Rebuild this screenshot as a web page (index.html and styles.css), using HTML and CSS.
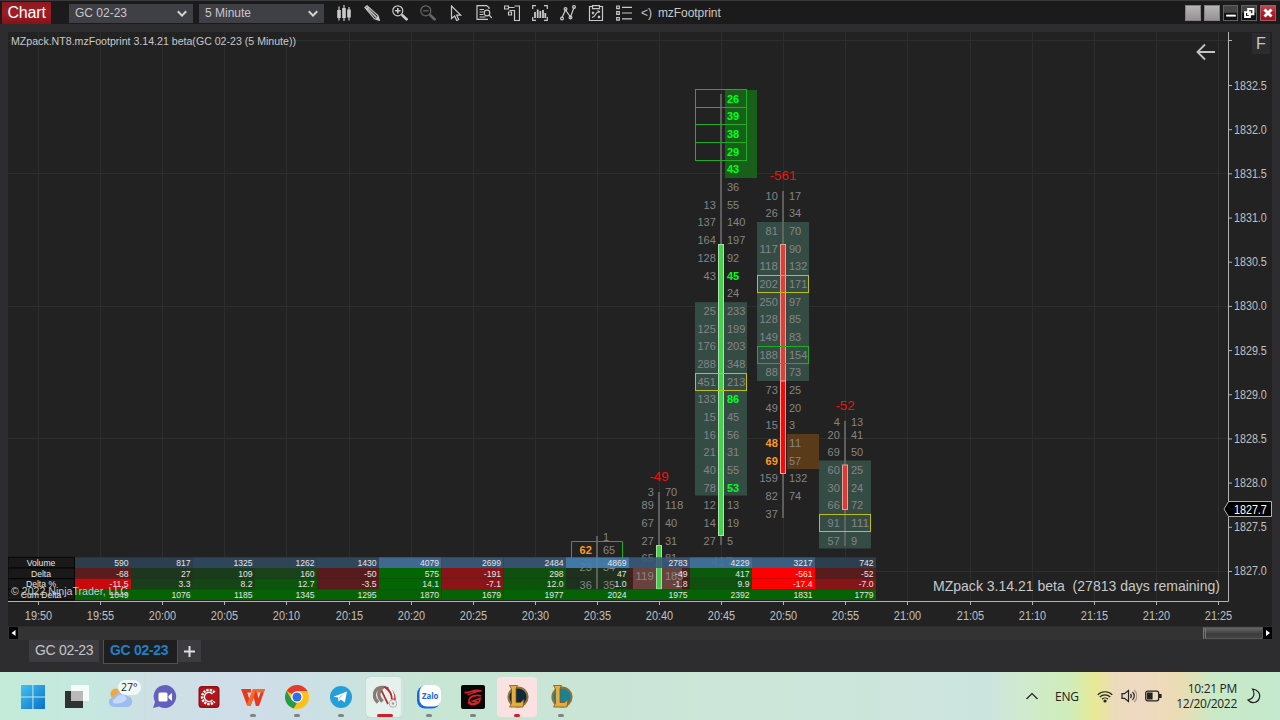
FILE: index.html
```html
<!DOCTYPE html>
<html lang="en">
<head>
<meta charset="utf-8">
<title>Chart - GC 02-23</title>
<link rel="stylesheet" href="styles.css">
</head>
<body>
<div class="window">
  <header class="titlebar">
    <div class="brand">Chart</div>
    <div class="combo combo-first"><span>GC 02-23</span><svg width="10" height="7" viewBox="0 0 10 7"><path d="M.8 1.200 5 5.600 9.200 1.200"/></svg></div>
    <div class="combo"><span>5 Minute</span><svg width="10" height="7" viewBox="0 0 10 7"><path d="M.8 1.200 5 5.600 9.200 1.200"/></svg></div>
    <div class="tools">
      <svg viewBox="0 0 16 16"><path d="M3 1.500v14M8 0v16M13 2v13.500"/><path class="fill" d="M1.200 5h3.600v8H1.200zM6.200 3h3.600v10H6.200zM11.200 4.500h3.600v8h-3.600z"/></svg>
      <svg viewBox="0 0 16 16"><path d="M1 2.500 3 .8 14 10.500 15.300 15.300 10.500 13.800z"/><path d="M2.500 2.500 12.500 12.500M2.500 4.500 4.800 2.200" stroke-width="1.600"/><path class="fill" d="M11.500 13.800 14 11 15.600 15.600z"/></svg>
      <svg viewBox="0 0 16 16"><circle cx="5.800" cy="5.800" r="5"/><path d="M3 5.800h5.600M5.800 3v5.600" stroke-width="1.600"/><path class="thick" d="M9.800 9.800 15.300 15"/></svg>
      <svg class="off" viewBox="0 0 16 16"><circle cx="5.800" cy="5.800" r="5"/><path d="M3 5.800h5.600"/><path class="thick" d="M9.800 9.800 15.300 15"/></svg>
      <svg viewBox="0 0 16 16"><path d="M3.500 1v12.500L6.700 11l2 4.500 2-1-2-4.300h4z"/></svg>
      <svg viewBox="0 0 16 16"><path d="M13 4V2.500L10.500 .6H1v13.800h11M3.500 4.500H8M3.500 7h4M3.500 9.500h4M3.500 12h6"/><circle cx="11" cy="8" r="2.800"/><path d="M13 10l3 3"/></svg>
      <svg viewBox="0 0 16 16"><path d="M10.500 1h5v14.500h-5v-10h-5M.5 1h4v3h-4zM5 2.500h5.500M5.500 7h-1v3h3V7z"/></svg>
      <svg viewBox="0 0 16 16"><path d="M.7 4V.7H4M12 .7h3.300V4M.7 12v3.300H4M12 15.300h3.300V12"/><path d="M3 7v6M5.700 4.500V13M8.300 6v7M11 5v8M13.300 8v5" stroke-width="1.800"/></svg>
      <svg viewBox="0 0 16 16"><path d="M2 12.500 5.500 5l5 7L14 2.500"/><circle cx="2" cy="13.500" r="1.400"/><circle cx="5.500" cy="4" r="1.400"/><circle cx="10.500" cy="12.500" r="1.400"/><circle cx="14" cy="2" r="1.400"/></svg>
      <svg viewBox="0 0 16 16"><path d="M4 1.500H1.500v14h13v-14H12M4.500 .6h7v3h-7zM4 7l2 2M6 7 4 9M10 11l2 2m0-2-2 2M4 12.500l2-1 3-4 3-.500M9.500 5.500 12 7"/></svg>
      <svg viewBox="0 0 16 16"><path d="M.7 1h2.600v2.600H.7zM.7 6.700h2.600v2.600H.7zM.7 12.500h2.600v2.600H.7zM6 2.300h10M6 8h10M6 13.800h10"/></svg>
    </div>
    <div class="script-name"><span>&lt;)</span><span>mzFootprint</span></div>
    <div class="winbtns">
      <i class="wb light"></i><i class="wb light"></i>
      <i class="wb"><svg viewBox="0 0 16 16"><path d="M2.500 11h11"/></svg></i>
      <i class="wb"><svg viewBox="0 0 16 16"><path d="M7 3.500h6v6H7zM3.500 7h5.500v5.500H3.500z"/></svg></i>
      <i class="wb close"><svg viewBox="0 0 16 16"><path d="M4 4l8 8M12 4l-8 8"/></svg></i>
    </div>
  </header>
  <main class="panel">
    <svg id="chart" class="chart" width="1264" height="594" viewBox="8 32 1264 594"></svg>
    <div class="scrollbar">
      <span class="arrow"><svg viewBox="0 0 9 12"><path d="M6.500 3v6L2.500 6z"/></svg></span>
      <span class="thumb"></span>
      <span class="arrow"><svg viewBox="0 0 9 12"><path d="M3 3v6l4-3z"/></svg></span>
    </div>
    <nav class="tabs">
      <span class="tab">GC 02-23</span>
      <span class="tab active">GC 02-23</span>
      <span class="tab add"><svg width="11" height="11" viewBox="0 0 11 11"><path d="M5.500 0v11M0 5.500h11"/></svg></span>
    </nav>
  </main>
</div>
<footer class="taskbar">
  <div class="apps">
    <div class="app"><svg viewBox="0 0 24 24"><defs><linearGradient id="win" x2="1" y2="1"><stop stop-color="#42c3f3"/><stop offset="1" stop-color="#0a6ecb"/></linearGradient></defs><path fill="url(#win)" d="M0 0h11.400v11.400H0zM12.400 0H24v11.400H12.400zM0 12.400h11.400V24H0zM12.400 12.400H24V24H12.400z"/></svg></div>
    <div class="app"><svg viewBox="0 0 24 24"><path fill="#303232" d="M0 6h18v17H0z"/><path fill="#fff" opacity=".8" d="M6 0h18v16H6z"/><path fill="#b9b9b9" d="M6 6h12v10H6z"/></svg></div>
    <div class="app weather"><svg viewBox="0 0 24 24"><circle cx="7" cy="9" r="5.500" fill="#f0a83a"/><path fill="#9dbcf0" d="M5 22a5 5 0 0 1 0-10 7 7 0 0 1 13-1 5.600 5.600 0 0 1 1 11z"/><path fill="#c6d9f8" d="M4 18a4 4 0 0 1 3-5 6 6 0 0 1 10-1c3 4-7 8-13 6z"/></svg><b>27°</b></div>
    <div class="app"><svg viewBox="0 0 24 24"><path fill="#6460be" d="M12 0a11.500 11.500 0 1 1-6 21.500L0 23l2-6A11.500 11.500 0 0 1 12 0z"/><rect x="5.500" y="7.500" width="9" height="9" rx="1.500" fill="#fff"/><path fill="#fff" d="m15.500 11 3.500-3v8l-3.500-3z"/></svg></div>
    <div class="app"><svg viewBox="0 0 24 24"><rect x="1.500" y="1" width="21" height="22" rx="3.500" fill="#8c1016"/><rect x="3" y="2.500" width="18" height="19" rx="2.500" fill="#b5141b"/><path d="M17.500 7.500a7 7 0 1 0 0 9" fill="none" stroke="#fff" stroke-width="2.600" stroke-dasharray="2.200 1"/><path d="M15.500 9a4.600 4.600 0 1 0 0 6" fill="none" stroke="#fff" stroke-width="1.300"/></svg></div>
    <div class="app run"><svg viewBox="0 0 24 24"><path fill="#e8391e" d="M0 4h10v3.500H6.300L8.300 14 12 4h3.500l1.800 9.500L21 4h3l-6 17h-3.200l-2-8.500L9.500 21H6.300z"/><path fill="#f76a2c" d="M14.500 4H24l-1.200 3.500h-7.600zM5.800 19.500 12 4h3.200L9.500 21H6.300z"/></svg></div>
    <div class="app run"><svg viewBox="0 0 24 24"><circle cx="12" cy="12" r="12" fill="#fbc116"/><path fill="#e33b2e" d="M12 12 1.600 6A12 12 0 0 1 22.400 6H12z"/><path fill="#239b4b" d="M1.600 6 6.800 15l5.200 3-3.400 5.500A12 12 0 0 1 1.600 6z"/><circle cx="12" cy="12" r="5.800" fill="#fff"/><circle cx="12" cy="12" r="4.500" fill="#2f70e8"/></svg></div>
    <div class="app run"><svg viewBox="0 0 24 24"><circle cx="12" cy="12" r="11" fill="#259fd9"/><path fill="#fff" d="m4.500 11.800 13.500-5.300-2.200 11-4-3-2.200 2-.6-4z"/><path d="m9 13 6-4.500-4.500 5.300" fill="#a8cce0"/></svg></div>
    <div class="app run red current"><svg viewBox="0 0 24 24"><path d="M5 17.500C-2 11 2 2 9.500 2.500c-5 4-5 9 0 14" fill="none" stroke="#8a7c75" stroke-width="3.400"/><path d="M10 2c8-2 15 7 12 17l-4-5c0-5-3-9-8-12z" fill="#bf2429"/><path d="M16 2.500c3 3 4.500 7 4.500 11M10 5l5 13" fill="none" stroke="#fff" stroke-width="1.800"/><path d="M8.500 5.500 15 19" stroke="#a83a3c" stroke-width="1.800"/><circle cx="20" cy="18.500" r="3.800" fill="#eee" stroke="#b5aaaa"/><circle cx="20" cy="18.500" r="1.300" fill="#a99"/></svg></div>
    <div class="app run"><svg viewBox="0 0 24 24"><rect x="0" y="1" width="23" height="22.500" rx="8" fill="#1768df"/><rect x="2.500" y="0" width="21.500" height="21.500" rx="7" fill="#fff"/><text class="zalo" x="13.200" y="14.200" text-anchor="middle" textLength="16.500" lengthAdjust="spacingAndGlyphs">Zalo</text></svg></div>
    <div class="app run"><svg viewBox="0 0 24 24"><rect width="24" height="24" rx="2" fill="#080808"/><path d="M3.500 7.500c6 1 9-4 17-1.500-8-.5-7 3-14 3.500M20 11c-4-1.500-11 0-12 4s6 5 8 2l-4-1 7-2.500c0 6-9 8-12 3.500" fill="none" stroke="#dc2028" stroke-width="1.700"/></svg></div>
    <div class="app run red pink"><svg viewBox="0 0 24 24"><circle cx="13" cy="12" r="9.600" fill="#102a3d" stroke="#927238" stroke-width="2"/><path d="M4.500 .5h8l-1.500 3v14h4.500l3.500-3-1 7.500H4.500l2-3.500V4z" fill="#e2ae43" stroke="#80571a" stroke-width=".8"/></svg></div>
    <div class="app run"><svg viewBox="0 0 24 24"><circle cx="13" cy="12" r="9.600" fill="#168496" stroke="#927238" stroke-width="2"/><path d="M4.500 .5h8l-1.500 3v14h4.500l3.500-3-1 7.500H4.500l2-3.500V4z" fill="#e2ae43" stroke="#80571a" stroke-width=".8"/></svg></div>
  </div>
  <div class="tray">
    <svg class="chev" width="12" height="8" viewBox="0 0 12 8"><path d="M.5 7 6 1.500 11.500 7"/></svg>
    <span class="lang">ENG</span>
    <svg class="wifi" width="16" height="13" viewBox="0 0 16 13"><path d="M.7 4.800a10.300 10.300 0 0 1 14.600 0M2.800 7a7.300 7.300 0 0 1 10.400 0M5 9.200a4.300 4.300 0 0 1 6 0"/><circle cx="8" cy="11" r="1" fill="#222"/></svg>
    <svg class="vol" width="16" height="14" viewBox="0 0 16 14"><path d="M1 4.700h2.500L7.500 1.500v11L3.500 9.300H1zM9.500 5a3 3 0 0 1 0 4M11.500 3a5.500 5.500 0 0 1 0 8"/><path d="M13.300 1a8.500 8.500 0 0 1 0 12" opacity=".35"/></svg>
    <svg class="batt" width="17" height="12" viewBox="0 0 17 12"><rect x=".7" y="1.200" width="13" height="9.600" rx="2"/><path fill="#222" d="M2.500 3h4.500v6H2.500zM14.500 4.500H16v3h-1.500z"/></svg>
    <div class="clock"><span>10:21 PM</span><span>12/20/2022</span></div>
    <svg class="moon" width="14" height="16" viewBox="0 0 14 16"><path d="M5.500 1C11 1.500 13.500 6 12.500 9.500 11 15.500 4.500 16 1 12c4.500-.5 8-5 4.500-11z"/></svg>
  </div>
</footer>
<script src="chart.js"></script>
</body>
</html>
```

FILE: styles.css
```css
* { box-sizing: border-box; }
body {
  margin: 0;
  width: 1280px;
  height: 720px;
  overflow: hidden;
  display: flex;
  flex-direction: column;
  background: #2d2d30;
  font-family: "Liberation Sans", Arial, sans-serif;
}
.window { height: 672px; display: flex; flex-direction: column; background: #2d2d30; }

/* Title bar */
.titlebar {
  height: 24px;
  flex: none;
  display: flex;
  align-items: center;
  padding: 1px 4px 0 2px;
  border-top: 1px solid #39393c;
  background: #1b1b1c;
  color: #c8c8c8;
  font-size: 12px;
}
.brand {
  width: 49px;
  height: 22px;
  padding-left: 5.500px;
  line-height: 21px;
  font-size: 16px;
  letter-spacing: -.2px;
  color: #fff;
  background: linear-gradient(#8a1a20, #a01d24 50%, #841218);
}
.combo {
  width: 125px;
  height: 19px;
  margin-left: 6px;
  padding: 0 6px;
  display: flex;
  align-items: center;
  justify-content: space-between;
  background: #3f3f46;
}
.combo-first { width: 124px; margin-left: 18px; }
.combo svg { fill: none; stroke: #d4d4d4; stroke-width: 2; }
.tools { display: flex; gap: 12px; margin-left: 12px; }
.tools svg { width: 16px; height: 16px; fill: none; stroke: #c9c9c9; stroke-width: 1.200; }
.tools .fill { fill: #c9c9c9; stroke: none; }
.tools .thick { stroke-width: 2.600; }
.tools .off { stroke: #666; }
.script-name { display: flex; gap: 6px; margin-left: 9px; letter-spacing: -.05px; }
.winbtns { display: flex; gap: 3px; margin-left: auto; }
.wb {
  width: 15.800px;
  height: 16px;
  border: 1px solid #606063;
  background: linear-gradient(#444 45%, #111 50%);
}
.wb.light { background: linear-gradient(#b9b5b7, #969294); border-color: #858284; }
.wb.close { background: linear-gradient(#b84b51, #b51c27 50%, #98131e); border-color: #a25b60; }
.wb svg { display: block; width: 14px; height: 14px; fill: none; stroke: #fff; stroke-width: 2.200; }
.wb.close svg { stroke-width: 3.400; }

/* Chart panel */
.panel { display: flex; flex-direction: column; padding: 8px 8px 0; }
.chart { display: block; background: #222; }
.chart text { font-family: "Liberation Sans", Arial, sans-serif; }
.grid { stroke: #2d2d2d; }
.axis { stroke: #b4b4b4; fill: none; }
.axis-label { fill: #c0c0c0; font-size: 12px; }
.num { fill: #858585; font-size: 11.500px; }
.num.buy { fill: #00ff1e; font-weight: bold; }
.num.sell { fill: #ff9a1e; font-weight: bold; }
.end { text-anchor: end; }
.mid { text-anchor: middle; }
.delta { fill: #f01010; font-size: 13.300px; }
.delta.up { fill: #0c8a10; }
.wick { stroke: #6c6c6c; stroke-width: 1.600; }
.cluster { fill: #354c45; }
.box { fill: none; stroke: #1fae25; stroke-width: 1; }
.box.poc { stroke: #bdbd20; }
.cell-text { fill: #e4e4e4; font-size: 8.600px; }
.head { fill: #191919; stroke: #050505; }
.note { fill: #c8c8c8; font-size: 14.600px; }
.small-note { fill: #c8c8c8; font-size: 11px; }
.copyright { fill: #c8c8c8; font-size: 11.500px; }
.marker { fill: #000; stroke: #b0b0b0; }

.scrollbar {
  height: 13px;
  margin-top: 1px;
  padding-left: 1px;
  display: flex;
  justify-content: flex-end;
  background: #333334;
}
.scrollbar .arrow { width: 9px; height: 12px; background: #000; }
.scrollbar .arrow:first-child { margin-right: auto; }
.scrollbar .arrow svg { display: block; fill: #fff; }
.thumb {
  width: 60px;
  height: 12px;
  border: 1px solid #555;
  border-left: 3px double #777;
  background: linear-gradient(#666, #3c3c3c 60%, #444);
}
.tabs { display: flex; padding-left: 21px; font-size: 14px; letter-spacing: -.3px; color: #c4c4c4; align-items: flex-start; }
.tab { width: 70px; height: 22px; padding-left: 6px; line-height: 21px; background: #3c3c40; }
.tab.active {
  width: 75px;
  height: 24px;
  margin-left: 4px;
  border: 1px solid #1d5e8c;
  border-top: 0;
  background: #1e1e1f;
  color: #2080c4;
  font-weight: bold;
}
.tab.add { width: 23px; padding: 6px 0 0 6px; line-height: 0; }
.tab.add svg { stroke: #ddd; stroke-width: 2; }

/* Taskbar */
.taskbar {
  height: 48px;
  display: flex;
  justify-content: space-between;
  padding: 2px 19px 0 11px;
  color: #222;
  font-family: "Open Sans", "Noto Sans", sans-serif;
  background: linear-gradient(90deg, #c3ebd8 0, #c5e8df 90px, #cde0e4 150px, #cfdde9 250px, #cbe1e3 330px, #c6e6d3 430px, #cae5d6 580px, #cce6d9 760px, #cce4df 990px, #cfead0 1020px, #d0edb9 1070px, #e8e994 1096px, #ecdbbb 1115px, #eed9c2 1140px, #ebdcb3 1180px, #c9eac6 1215px, #c5e9cf 1280px);
}
.apps { display: flex; }
.app {
  width: 44px;
  height: 46px;
  display: flex;
  flex-direction: column;
  align-items: center;
  padding-top: 11px;
  gap: 5px;
}
.app svg { width: 24px; height: 24px; flex: none; }
.app.run::after { content: ""; width: 6px; height: 3px; border-radius: 2px; background: #7d8484; }
.app.red::after { background: #cf1f2c; }
.app.current::after { width: 16px; }
.app.current, .app.pink {
  width: 40px;
  height: 40px;
  margin: 3px 2px 0;
  padding-top: 8px;
  border-radius: 4px;
  background: #e4f1ec;
}
.app.current { box-shadow: inset -3px 0 0 #cfe4dc, 0 0 1px #8aa; width: 38px; margin: 3px 3px 0; }
.app.pink { background: #fbe2e2; }
.weather { position: relative; }
.weather b {
  position: absolute;
  left: 19px;
  top: 6px;
  padding: 1px 3px;
  border-radius: 8px;
  background: #f2f8f6;
  font-size: 10.500px;
  line-height: 13px;
  font-weight: normal;
}
.zalo { font-family: "Open Sans", sans-serif; font-size: 9px; font-weight: bold; fill: #1768df; }
.tray { display: flex; align-items: center; font-size: 12px; height: 44px; }
.tray svg { fill: none; stroke: #222; stroke-width: 1.200; flex: none; }
.lang { margin: 0 18px 0 17px; width: 24px; letter-spacing: -.2px; }
.vol { margin-left: 8px; }
.batt { margin-left: 8px; }
.clock { width: 75px; display: flex; flex-direction: column; align-items: flex-end; line-height: 15px; letter-spacing: -.3px; white-space: nowrap; }
.moon { margin-left: 10px; }
```

FILE: chart.js
```js
const NS = "http://www.w3.org/2000/svg";
const chart = document.getElementById("chart");

function add(tag, attrs, text) {
  const el = document.createElementNS(NS, tag);
  for (const key in attrs) el.setAttribute(key, attrs[key]);
  if (attrs.textLength) el.setAttribute("lengthAdjust", "spacingAndGlyphs");
  if (text !== undefined) el.textContent = text;
  chart.appendChild(el);
  return el;
}
const line = (x1, y1, x2, y2, cls) => add("line", { x1, y1, x2, y2, class: cls });
const rect = (x, y, width, height, attrs) => add("rect", { x, y, width, height, ...attrs });
const label = (x, y, text, cls, attrs) => add("text", { x, y, class: cls, ...attrs }, text);

const STEP = 62.1;
const ROW = 17.67;

// Grid
for (let i = 0; i < 20; i++) line(Math.round(38 + i * STEP) + .5, 32, Math.round(38 + i * STEP) + .5, 601, "grid");
[40.5, 173.5, 306.5, 438.5, 571.5].forEach(y => line(8, y, 1228, y, "grid"));

// Summary table: right edge, volume, delta, delta %, cumulative delta, cell colours
const columns = [
  [131, "590", "-68", "-11.5", "1049", "#2d4051", "#5b1c1d", "#c80a0c"],
  [193, "817", "27", "3.3", "1076", "#2e4356", "#1d361d", "#1a3d1a"],
  [255, "1325", "109", "8.2", "1185", "#31495f", "#1b3c1b", "#154515"],
  [317, "1262", "160", "12.7", "1345", "#31485d", "#1a431a", "#0d540d"],
  [379, "1430", "-50", "-3.5", "1295", "#324a61", "#571b1d", "#5a1b1d"],
  [441.5, "4079", "575", "14.1", "1870", "#43719d", "#036603", "#036503"],
  [503.5, "2699", "-191", "-7.1", "1679", "#3a5b79", "#871517", "#8c1416"],
  [566, "2484", "298", "12.0", "1977", "#395775", "#0f500f", "#0c540c"],
  [629, "4869", "47", "1.0", "2024", "#4682b4", "#1e301e", "#1e301e"],
  [690, "2783", "-49", "-1.8", "1975", "#3a5b7b", "#4a1c1d", "#431c1d"],
  [752, "4229", "417", "9.9", "2392", "#4375a3", "#0b590b", "#0f500f"],
  [815, "3217", "-561", "-17.4", "1831", "#3d6589", "#ff0000", "#ff0000"],
  [876, "742", "-52", "-7.0", "1779", "#2e4254", "#581c1d", "#851517"]
];
const rowY = [557.3, 568, 578.7, 589.3];
function drawCell(col, row, fill, opacity) {
  const left = col ? columns[col - 1][0] : 75;
  rect(left, rowY[row], columns[col][0] - left, 10.7, { fill, opacity });
}
columns.forEach((c, i) => { drawCell(i, 1, c[6], 1); drawCell(i, 2, c[7], 1); });

// Highlight zones
rect(725, 90, 32, 88, { fill: "#18601a" });
rect(695, 302.2, 52, 193.300, { class: "cluster" });
rect(757, 222, 52, 159, { class: "cluster" });
rect(819, 460.5, 52, 88, { class: "cluster" });
rect(787, 434, 32, 35, { fill: "#593a19" });
rect(633, 568, 49, 21.3, { fill: "#69413f" });

// Wicks
[[597, 536, 589], [659, 492, 589], [721, 94, 545], [783, 191, 518], [845, 421, 546]]
  .forEach(w => line(w[0], w[1], w[0], w[2], "wick"));

// Candle bodies
const body = (x, top, bottom, fill, edge) =>
  rect(x - 2.5, top, 5, bottom - top, { fill, stroke: edge, "stroke-width": 1 });
body(659, 545.5, 589, "#45cc48", "#a5dfa0");
body(721, 244.5, 535.5, "#46d04c", "#a9e3ad");
body(783, 244.5, 473.5, "#dc4038", "#e4a49b");
rect(780.5, 381, 5, 92.500, { fill: "#ff0606", stroke: "#f2aaa5" });
body(845, 465, 509.5, "#dc3a35", "#e4a49b");

// Outlined cells
[89.5, 107.5, 124.5, 142.5].forEach((y, i, all) => rect(695.5, y, 51, (all[i + 1] || 160.5) - y, { class: "box" }));
rect(695.5, 373.5, 51, 17, { class: "box poc" });
rect(757.5, 275.5, 51, 17, { class: "box poc" });
rect(757.5, 346.5, 51, 17, { class: "box" });
rect(819.5, 514.5, 51, 17, { class: "box poc" });
add("path", { d: "M571.5 558V541.5H622.5V558", class: "box" });

// Footprints: "bid ask", "_" for an empty side, "b" marks buy and "s" sell imbalance
function footprint(x, rows, yOf) {
  rows.forEach((row, i) => row.split(" ").forEach((value, side) => {
    if (value === "_") return;
    const mark = value.endsWith("b") ? " buy" : value.endsWith("s") ? " sell" : "";
    const digits = value.replace(/[bs]/, "");
    label(side ? x + 6 : x - 5.2, yOf(i) + 4, digits, "num" + mark + (side ? "" : " end"), { textLength: digits.length * 6.1 });
  }));
}
footprint(721, ["_ 26b", "_ 39b", "_ 38b", "_ 29b", "_ 43b", "_ 36", "13 55", "137 140", "164 197", "128 92", "43 45b", "_ 24", "25 233", "125 199", "176 203", "288 348", "451 213", "133 86b", "15 45", "16 56", "21 31", "40 55", "78 53b", "12 13", "14 19", "27 5"], i => 98.8 + i * ROW);
footprint(783, ["10 17", "26 34", "81 70", "117 90", "118 132", "202 171", "250 97", "128 85", "149 83", "188 154", "88 73", "73 25", "49 20", "15 3", "48s 11", "69s 57", "159 132", "82 74", "37 _"], i => 195.7 + i * ROW);
const lateY = [421.5, 434.5, 452, 469.5, 487.5, 505, 523, 541];
footprint(845, ["4 13", "20 41", "69 50", "60 25", "30 24", "66 72", "91 111", "57 9"], i => lateY[i]);
const earlyY = [492, 505, 523, 541, 558, 576];
footprint(659, ["3 70", "89 118", "67 40", "27 31", "65 81", "119 183"], i => earlyY[i]);
const firstY = [536.5, 549.5, 567, 585];
footprint(597, ["_ 1", "62s 65", "23 34", "36 35"], i => firstY[i]);

label(783, 180, "-561", "delta mid");
label(659, 481, "-49", "delta mid");
label(845, 410, "-52", "delta mid");
label(722, 566, "417", "delta up mid");

// Volume and cumulative rows lie over the footprints
columns.forEach((c, i) => { drawCell(i, 0, c[5], .9); drawCell(i, 3, "#056305", 1); });
["Volume", "Delta", "Delta %", "Cum Delta"].forEach((name, r) => {
  rect(8, rowY[r], 66.5, 10.7, { class: "head" });
  label(41, rowY[r] + 8.5, name, "cell-text mid");
  columns.forEach(c => label(c[0] - 2.5, rowY[r] + 8.5, c[r + 1], "cell-text end"));
});

// Axes
add("path", { d: "M8 601.5H1228.5V32", class: "axis" });
for (let i = 0; i < 20; i++) {
  const x = Math.round(38 + i * STEP) + .5;
  const minutes = 19 * 60 + 50 + i * 5;
  line(x, 602, x, 605, "axis");
  label(x, 619.500, Math.floor(minutes / 60) + ":" + String(minutes % 60).padStart(2, "0"), "axis-label mid", { textLength: 27.3 });
}
line(1228, 40.5, 1232, 40.5, "axis");
for (let i = 0; i < 12; i++) {
  const y = 85.5 + i * 44.18;
  line(1228, y, 1232, y, "axis");
  label(1234, y + 4, (1832.5 - i * .5).toFixed(1), "axis-label", { textLength: 32.8 });
}
add("path", { d: "M1224 509 1228.5 501.5H1271.5V516.5H1228.5Z", class: "marker" });
label(1234, 513.5, "1827.7", "axis-label", { textLength: 32.8, style: "fill:#fff" });

// Captions and corner controls
label(11, 45, "MZpack.NT8.mzFootprint 3.14.21 beta(GC 02-23 (5 Minute))", "small-note", { textLength: 285 });
label(933, 590.5, "MZpack 3.14.21 beta \u00a0(27813 days remaining)", "note", { textLength: 287 });
label(11, 595, "© 2022 NinjaTrader, LLC", "copyright", { textLength: 117 });
add("path", { d: "M1215 52H1198M1205 44.500 1197.500 52 1205 59.500", fill: "none", stroke: "#c4c4c4", "stroke-width": 1.8 });
rect(1252, 33, 18, 21, { fill: "#2c2c30" });
label(1261, 48.5, "F", "note mid", { style: "font-size:16px" });
```
